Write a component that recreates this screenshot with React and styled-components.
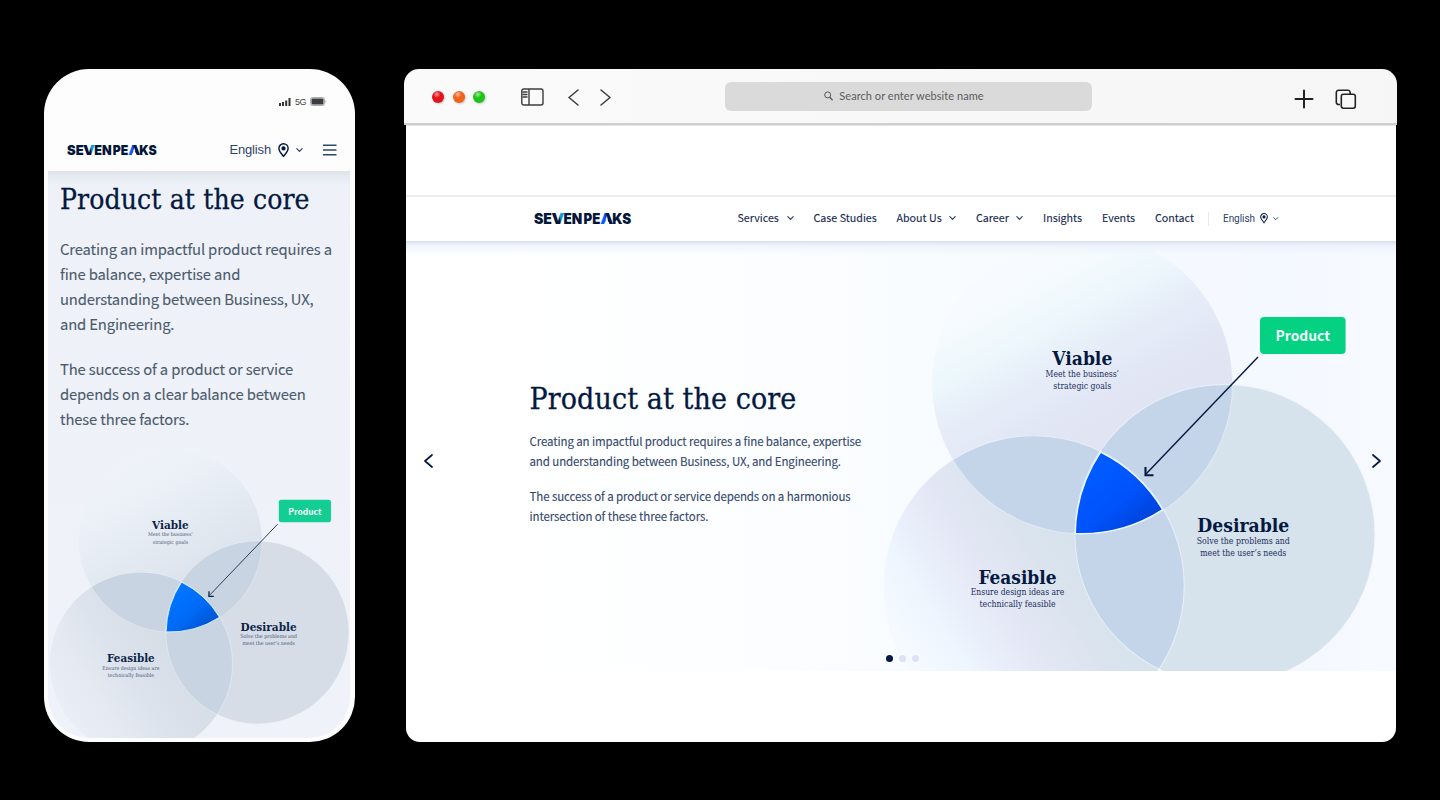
import React from "react";
import styled, { createGlobalStyle } from "styled-components";

const sans = `"Noto Sans CJK JP", "Noto Sans", sans-serif`;
const serif = `"DejaVu Serif Condensed", "DejaVu Serif", serif`;
const navy = "#041840";

const GlobalStyle = createGlobalStyle`
  *, *::before, *::after { box-sizing: border-box; }
  body { margin: 0; background: #000; font-family: ${sans}; color: ${navy}; }
  svg { display: block; flex: none; }
  h1, h2, p { margin: 0; }
`;

const Stage = styled.main`
  display: flex;
  justify-content: space-between;
  width: 1440px;
  height: 800px;
  padding: 69px 43px 58px 44px;
  background: #000;
  overflow: hidden;
`;

/* ---------- phone ---------- */

const Phone = styled.section`
  display: flex;
  flex-direction: column;
  width: 311px;
  height: 673px;
  padding: 0 5px 4px 4px;
  background: #fdfdfd;
  border-radius: 45px;
  overflow: hidden;
`;

const StatusBar = styled.div`
  display: flex;
  align-items: center;
  justify-content: flex-end;
  gap: 4px;
  height: 59px;
  padding: 6px 23px 0 0;
  font: 9px/12px "Liberation Sans", sans-serif;
  letter-spacing: -0.5px;
  color: #444;
`;

const PhoneHeader = styled.header`
  display: flex;
  align-items: center;
  height: 43px;
  padding: 1px 13px 0 19px;
`;

const PhoneLanguage = styled.div`
  display: flex;
  align-items: center;
  gap: 7px;
  margin: 0 20px 0 auto;
`;

const Language = styled.span`
  font-family: ${(p) => (p.$small ? `Roboto, sans-serif` : `"Liberation Sans", sans-serif`)};
  font-size: ${(p) => (p.$small ? 10 : 13)}px;
  line-height: 16px;
  letter-spacing: ${(p) => (p.$small ? -0.05 : -0.15)}px;
  color: #2f456a;
`;

const PhoneBody = styled.div`
  display: flex;
  flex-direction: column;
  flex: 1;
  padding-top: 11px;
  background: linear-gradient(180deg, #dfe4eb 0, #eef2f8 14px, #eff2f9 100%);
  border-radius: 0 0 41px 41px;
  overflow: hidden;
`;

const Title = styled.h1`
  font-family: ${serif};
  font-stretch: condensed;
  font-weight: 400;
  font-size: ${(p) => p.$size}px;
  line-height: 36px;
  letter-spacing: ${(p) => p.$track}px;
  -webkit-text-stroke: 0.3px ${navy};
  white-space: nowrap;
  color: ${navy};
`;

const PhoneCopy = styled.div`
  display: flex;
  flex-direction: column;
  height: 265px;
  padding-left: 12px;
`;

const Paragraph = styled.p`
  margin-top: ${(p) => p.$top}px;
  font-size: ${(p) => p.$size}px;
  line-height: ${(p) => p.$leading}px;
  letter-spacing: ${(p) => p.$track || 0}px;
  -webkit-text-stroke: 0.1px ${(p) => p.$color};
  color: ${(p) => p.$color};
`;

const Line = styled.span`
  display: block;
  white-space: nowrap;
`;

/* ---------- browser ---------- */

const Browser = styled.section`
  display: flex;
  flex-direction: column;
  align-items: center;
  width: 993px;
  height: 673px;
`;

const Toolbar = styled.header`
  display: flex;
  align-items: center;
  width: 993px;
  height: 56px;
  padding: 0 40px 0 28px;
  background: linear-gradient(90deg, #fafafa, #f6f6f6);
  border-bottom: 2px solid #cfcfcf;
  border-radius: 15px 15px 0 0;
`;

const Controls = styled.div`
  display: flex;
  align-items: center;
  padding-top: 2px;
`;

const Lights = styled.div`
  display: flex;
  gap: 8.5px;
  margin-right: 36px;
`;

const Light = styled.i`
  width: 12px;
  height: 12px;
  border-radius: 50%;
  background: radial-gradient(circle at 40% 28%, #fff9 0, #fff0 32%), ${(p) => p.$color};
  box-shadow: 1px 1px 2px #0003;
`;

const History = styled.div`
  display: flex;
  gap: 21px;
  margin-left: 24px;
`;

const Address = styled.div`
  display: flex;
  align-items: center;
  justify-content: center;
  gap: 6px;
  width: 367px;
  height: 29px;
  margin: 0 auto 0 114px;
  padding-right: 9px;
  background: #dadada;
  border-radius: 6px;
  font: 11px/16px Lato, sans-serif;
  letter-spacing: 0.05px;
  color: #5c5c5c;
`;

const Tools = styled.div`
  display: flex;
  align-items: center;
  gap: 21px;
  padding-top: 6px;
`;

const Page = styled.div`
  display: flex;
  flex-direction: column;
  width: 990px;
  flex: 1;
  padding-top: 70px;
  background: #fff;
  border-radius: 0 0 14px 14px;
  box-shadow: inset 0 1px 0 #e4e4e4;
  overflow: hidden;
`;

const Nav = styled.nav`
  display: flex;
  align-items: center;
  height: 46px;
  padding: 0 0 1px 128px;
  border-top: 2px solid #ededed;
`;

const NavLinks = styled.div`
  display: flex;
  gap: 20px;
  margin-left: 107px;
`;

const NavLink = styled.span`
  display: flex;
  align-items: center;
  justify-content: space-between;
  width: ${(p) => p.$width}px;
  font-size: 10.7px;
  line-height: 18px;
  white-space: nowrap;
  -webkit-text-stroke: 0.1px #12274f;
  color: #12274f;
`;

const NavText = styled.span`
  padding-bottom: 2px;
`;

const NavLanguage = styled.div`
  display: flex;
  align-items: center;
  gap: 5px;
  height: 14px;
  margin-left: 14px;
  padding-left: 14px;
  border-left: 1px solid #e6e9f2;
`;

const Hero = styled.div`
  position: relative;
  display: flex;
  height: 430px;
  padding-left: 124px;
  background: linear-gradient(90deg, #fff 0, #fdfeff 30%, #f9fcff 50%, #f4f8ff 88%, #f7faff 100%);
  overflow: hidden;
`;

const HeaderShade = styled.div`
  position: absolute;
  inset: 0 0 auto 0;
  height: 14px;
  background: linear-gradient(180deg, #d9dff0 0, #e8effb99 35%, #eef4ff00 100%);
`;

const HeroCopy = styled.div`
  width: 347px;
  padding-top: 140px;
`;

const Arrow = styled.button`
  position: absolute;
  top: 213px;
  ${(p) => (p.$next ? "right: 15px" : "left: 18px")};
  padding: 0;
  border: 0;
  background: none;
  color: ${navy};
`;

const Dots = styled.div`
  position: absolute;
  left: 480px;
  bottom: 9px;
  display: flex;
  gap: 6px;
`;

const Dot = styled.i`
  width: 7px;
  height: 7px;
  border-radius: 50%;
  background: ${(p) => (p.$active ? navy : "#dde3f6")};
`;

/* ---------- drawings ---------- */

const Logo = ({ width, id }) => (
  <svg width={width} height={width * 0.155} viewBox="0 0 97 15" overflow="visible" fontFamily="Inter, sans-serif" fontWeight="900" fontSize="14.700" fill="#031539">
    <defs>
      <linearGradient id={`${id}v`} x1="0" x2="1" y1="0.300" y2="0">
        <stop offset="0.48" stopColor="#031539" />
        <stop offset="0.62" stopColor="#0a9cf0" />
      </linearGradient>
      <linearGradient id={`${id}a`} x1="0" x2="1" y1="0.300" y2="0">
        <stop offset="0.3" stopColor="#0a5cff" />
        <stop offset="0.48" stopColor="#031539" />
      </linearGradient>
    </defs>
    <text x="0" y="12.900" textLength="18" lengthAdjust="spacingAndGlyphs">SE</text>
    <text x="17.400" y="12.900" textLength="12.800" lengthAdjust="spacingAndGlyphs" fill={`url(#${id}v)`}>V</text>
    <text x="29.500" y="12.900" textLength="18.800" lengthAdjust="spacingAndGlyphs">EN</text>
    <text x="49.500" y="12.900" textLength="16.800" lengthAdjust="spacingAndGlyphs">PE</text>
    <text x="66.300" y="12.900" textLength="13" lengthAdjust="spacingAndGlyphs" fill={`url(#${id}a)`}>A</text>
    <path d="M72.800 6.800 75.300 13.400H70.300Z" fill="#fff" />
    <text x="78.300" y="12.900" textLength="19" lengthAdjust="spacingAndGlyphs">KS</text>
  </svg>
);

const Pin = ({ width }) => (
  <svg width={width} height={width * 1.3} viewBox="0 0 10 13" fill="none" stroke={navy} strokeWidth="1.3">
    <path d="M5 12.2C3.6 10.2.8 7.4.8 4.9a4.2 4.2 0 0 1 8.4 0c0 2.500-2.800 5.300-4.200 7.300Z" />
    <circle cx="5" cy="4.900" r="1.300" fill={navy} />
  </svg>
);

const Chevron = ({ width }) => (
  <svg width={width} height={width * 0.6} viewBox="0 0 10 6" fill="none" stroke="#2b4068" strokeWidth="1.700" strokeLinecap="round" strokeLinejoin="round">
    <path d="M1.200 1 5 4.800 8.800 1" />
  </svg>
);

const Angle = ({ width, height, right, stroke = 1.6, color = navy }) => (
  <svg width={width} height={height} viewBox={`0 0 ${width} ${height}`} fill="none" stroke={color} strokeWidth={stroke} strokeLinecap="round" strokeLinejoin="round">
    <path d={right ? `M1 1 ${width - 1} ${height / 2} 1 ${height - 1}` : `M${width - 1} 1 1 ${height / 2} ${width - 1} ${height - 1}`} />
  </svg>
);

const palettes = {
  vivid: {
    viable: [[0, "#f8fbff"], [0.15, "#f5fafe"], [0.28, "#edf8fc"], [0.4, "#e7eff9"], [0.62, "#e1e5f4"], [1, "#dde2f1"]],
    feasible: [[0, "#f7fbff"], [0.25, "#edf5fe"], [0.55, "#e4e7f5"], [0.8, "#dbe4ee"], [1, "#d6e2ec"]],
    desirable: "#d6e2ec",
    lens: "#c4d5e9",
    core: [[0, "#005bff"], [0.5, "#0052fa"], [1, "#003fd2"]],
    tag: "#04d182",
    ink: navy,
    small: "#1c2f5c",
  },
  muted: {
    viable: [[0, "#eff3f9"], [0.25, "#ebf0f7"], [0.5, "#e4eaf2"], [0.75, "#dde4ed"], [1, "#d8e0ea"]],
    feasible: [[0, "#eaeff6"], [0.3, "#e4e9f2"], [0.6, "#dde3ec"], [1, "#d5dde7"]],
    desirable: "#d6dde7",
    lens: "#c8d4e1",
    core: [[0, "#0074ff"], [0.5, "#0069f5"], [1, "#0050c8"]],
    tag: "#14cd93",
    ink: "#0b2348",
    small: "#4a5c7a",
  },
};

const circles = {
  viable: { cx: 1082.3, cy: 383.5, r: 150.3 },
  feasible: { cx: 1034.1, cy: 585.8, r: 150.1 },
  desirable: { cx: 1224.9, cy: 534.4, r: 150 },
};

const DiagramText = styled.g`
  font-family: ${serif};
  font-stretch: condensed;
  text-anchor: middle;
`;

const Label = ({ x, y, title, width, lines, palette }) => (
  <DiagramText>
    <text x={x} y={y} fontSize="18.800" fontWeight="700" fill={palette.ink} textLength={width} lengthAdjust="spacingAndGlyphs">{title}</text>
    {lines.map(([text, w], i) => (
      <text key={text} x={x} y={y + 11.8 + i * 11.8} fontSize="8.700" fill={palette.small} textLength={w} lengthAdjust="spacingAndGlyphs">{text}</text>
    ))}
  </DiagramText>
);

const Venn = ({ id, width, height, viewBox, tone }) => {
  const c = palettes[tone];
  const ramp = (name, x1, y1, x2, y2) => (
    <linearGradient id={`${id}-${name}`} x1={x1} y1={y1} x2={x2} y2={y2}>
      {c[name].map(([offset, color]) => (
        <stop key={offset} offset={offset} stopColor={color} />
      ))}
    </linearGradient>
  );
  return (
    <svg width={width} height={height} viewBox={viewBox}>
      <defs>
        {ramp("viable", 0.25, 0.07, 0.7, 0.9)}
        {ramp("feasible", 0.08, 0.78, 0.66, 0.4)}
        {ramp("core", 0.3, 0.2, 0.9, 0.9)}
        <linearGradient id={`${id}-rim`} x1="0.100" y1="0.200" x2="0.500" y2="0.600">
          <stop offset="0" stopColor="#f3f8ff" stopOpacity="0" />
          <stop offset="1" stopColor="#f3f8ff" stopOpacity="0.65" />
        </linearGradient>
        {Object.entries(circles).map(([name, shape]) => (
          <clipPath key={name} id={`${id}-clip-${name}`}><circle {...shape} /></clipPath>
        ))}
      </defs>
      <circle {...circles.viable} fill={`url(#${id}-viable)`} />
      <circle {...circles.feasible} fill={`url(#${id}-feasible)`} />
      <circle {...circles.desirable} fill={c.desirable} />
      <circle {...circles.viable} fill={c.lens} clipPath={`url(#${id}-clip-feasible)`} />
      <circle {...circles.viable} fill={c.lens} clipPath={`url(#${id}-clip-desirable)`} />
      <circle {...circles.feasible} fill={c.lens} clipPath={`url(#${id}-clip-desirable)`} />
      <g fill="none" stroke="#f3f8ff" strokeOpacity="0.650" strokeWidth="1.100">
        <circle {...circles.viable} stroke={`url(#${id}-rim)`} />
        <circle {...circles.feasible} />
        <circle {...circles.desirable} />
      </g>
      <path
        d="M1100.600 452A150 150 0 0 1 1162.700 509.600A150 150 0 0 1 1075.300 533.600A150 150 0 0 1 1100.600 452Z"
        fill={`url(#${id}-core)`} stroke="#e6f6ff" strokeWidth="1.400"
      />
      <path d="M1258 357 1146 474" fill="none" stroke={c.ink} strokeWidth="1.400" />
      <path d="M1145.500 467V475.300H1153.500" fill="none" stroke={c.ink} strokeWidth="2.100" />
      <rect x="1260" y="317" width="85.600" height="37" rx="4" fill={c.tag} />
      <text x="1302.800" y="341.200" textAnchor="middle" fontFamily={sans} fontWeight="700" fontSize="14" fill="#f0fff9" textLength="54.500" lengthAdjust="spacingAndGlyphs">Product</text>
      <Label x={1082.300} y={365.300} title="Viable" width={60} palette={c} lines={[["Meet the business’", 73.500], ["strategic goals", 58]]} />
      <Label x={1243.300} y={532.300} title="Desirable" width={92} palette={c} lines={[["Solve the problems and", 93], ["meet the user’s needs", 86]]} />
      <Label x={1017.500} y={583.500} title="Feasible" width={78} palette={c} lines={[["Ensure design ideas are", 93.500], ["technically feasible", 76]]} />
    </svg>
  );
};

const links = [
  ["Services", 56, true],
  ["Case Studies", 63, false],
  ["About Us", 59.5, true],
  ["Career", 47, true],
  ["Insights", 39, false],
  ["Events", 33, false],
  ["Contact", 39, false],
];

const PhoneMockup = () => (
  <Phone>
    <StatusBar>
      <svg width="12" height="8" viewBox="0 0 12 8" fill="#333">
        <rect y="5" width="2" height="3" /><rect x="3" y="4" width="2" height="4" />
        <rect x="6.200" y="2.500" width="2" height="5.500" /><rect x="9.500" width="2" height="8" />
      </svg>
      <span>5G</span>
      <svg width="17" height="9" viewBox="0 0 17 9">
        <rect x="0.500" y="0.500" width="14" height="8" rx="2" fill="#eee" stroke="#aaa" />
        <rect x="1.500" y="1.500" width="12" height="6" rx="1" fill="#3a3d41" />
        <path d="M15.500 3v3l1-1.500Z" fill="#aaa" />
      </svg>
    </StatusBar>
    <PhoneHeader>
      <Logo width={89.5} id="logo-phone" />
      <PhoneLanguage>
        <Language>English</Language>
        <Pin width={11} />
        <Chevron width={7} />
      </PhoneLanguage>
      <svg width="14" height="12" viewBox="0 0 14 12" stroke="#2b4a6a" strokeWidth="1.500">
        <path d="M0 1.200H13.500M0 6H13.500M0 10.800H13.500" />
      </svg>
    </PhoneHeader>
    <PhoneBody>
      <PhoneCopy>
        <Title $size={28} $track={0.12}>Product at the core</Title>
        <Paragraph $top={18} $size={14.8} $leading={25} $track={-0.15} $color="#4b5b6d">
          <Line>Creating an impactful product requires a</Line>
          <Line>fine balance, expertise and</Line>
          <Line>understanding between Business, UX,</Line>
          <Line>and Engineering.</Line>
        </Paragraph>
        <Paragraph $top={20} $size={14.8} $leading={25} $track={-0.15} $color="#4b5b6d">
          <Line>The success of a product or service</Line>
          <Line>depends on a clear balance between</Line>
          <Line>these three factors.</Line>
        </Paragraph>
      </PhoneCopy>
      <Venn id="venn-phone" width={302} height={291} viewBox="881.6 230.500 495.1 477" tone="muted" />
    </PhoneBody>
  </Phone>
);

const BrowserMockup = () => (
  <Browser>
    <Toolbar>
      <Controls>
        <Lights>
          <Light $color="#e3121b" />
          <Light $color="#f0641e" />
          <Light $color="#1fc41a" />
        </Lights>
        <svg width="23" height="18" viewBox="0 0 23 18" fill="none" stroke="#3c3c3c" strokeWidth="1.400">
          <rect x="0.800" y="1" width="21.200" height="16" rx="2" />
          <path d="M8 1V17M1.500 4H6.500M1.500 6.500H6.500M1.500 9H6.500" />
        </svg>
        <History>
          <Angle width={11} height={17} color="#3c3c3c" stroke={1.5} />
          <Angle right width={11} height={17} color="#3c3c3c" stroke={1.5} />
        </History>
      </Controls>
      <Address>
        <svg width="9" height="10" viewBox="0 0 9 10" fill="none" stroke="#555" strokeWidth="1">
          <circle cx="3.700" cy="3.900" r="3" /><path d="M5.800 6.200 8.600 9.200" strokeWidth="1.300" />
        </svg>
        <span>Search or enter website name</span>
      </Address>
      <Tools>
        <svg width="20" height="20" viewBox="0 0 20 20" stroke="#222" strokeWidth="2" strokeLinecap="round"><path d="M10 1.500V18.500M1.500 10H18.500" /></svg>
        <svg width="22" height="21" viewBox="0 0 22 21" fill="none" stroke="#222" strokeWidth="1.600">
          <path d="M5 15.500H3.500a2.200 2.200 0 0 1-2.200-2.200V3.500A2.200 2.200 0 0 1 3.500 1.300H13a2.200 2.200 0 0 1 2.200 2.200V5" />
          <rect x="6.300" y="5.200" width="14" height="14" rx="2.200" />
        </svg>
      </Tools>
    </Toolbar>
    <Page>
      <Nav>
        <Logo width={97} id="logo-desk" />
        <NavLinks>
          {links.map(([text, width, menu]) => (
            <NavLink key={text} $width={width}>
              <NavText>{text}</NavText>
              {menu && <Chevron width={7} />}
            </NavLink>
          ))}
        </NavLinks>
        <NavLanguage>
          <Language $small>English</Language>
          <Pin width={8} />
          <Chevron width={5.5} />
        </NavLanguage>
      </Nav>
      <Hero>
        <HeroCopy>
          <Title $size={30} $track={0.1}>Product at the core</Title>
          <Paragraph $top={14} $size={11.5} $leading={20} $track={-0.11} $color="#33476b">
            <Line>Creating an impactful product requires a fine balance, expertise</Line>
            <Line>and understanding between Business, UX, and Engineering.</Line>
          </Paragraph>
          <Paragraph $top={15} $size={11.5} $leading={20} $track={-0.11} $color="#33476b">
            <Line>The success of a product or service depends on a harmonious</Line>
            <Line>intersection of these three factors.</Line>
          </Paragraph>
        </HeroCopy>
        <Venn id="venn-desk" width={519} height={430} viewBox="877 241 519 430" tone="vivid" />
        <HeaderShade />
        <Arrow aria-label="Previous"><Angle width={9} height={14} stroke={1.7} /></Arrow>
        <Arrow $next aria-label="Next"><Angle right width={9} height={14} stroke={1.7} /></Arrow>
        <Dots><Dot $active /><Dot /><Dot /></Dots>
      </Hero>
    </Page>
  </Browser>
);

export default function App() {
  return (
    <>
      <GlobalStyle />
      <Stage>
        <PhoneMockup />
        <BrowserMockup />
      </Stage>
    </>
  );
}
